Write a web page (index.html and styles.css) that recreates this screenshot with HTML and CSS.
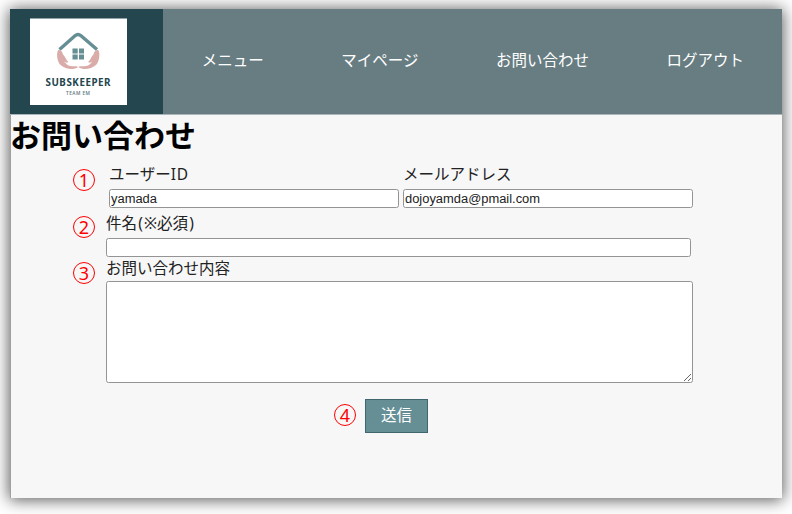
FILE: index.html
```html
<!DOCTYPE html>
<html lang="ja">
<head>
<meta charset="utf-8">
<title>お問い合わせ</title>
<link rel="stylesheet" href="styles.css">
</head>
<body>
<div class="page">
  <header class="header">
    <div class="brand">
      <svg class="logo" viewBox="0 0 97 87" role="img" aria-label="SUBSKEEPER">
        <rect y=".5" width="97" height="86.5" fill="#fff"/>
        <path d="M29.5 31.5 L45 17.8 Q48 15.2 51 17.8 L67 31.5" fill="none" stroke="#668e95" stroke-width="3.4"/>
        <path d="M42.5 30.5h5.2v5h-5.2zM49 30.5h5v5h-5zM42.5 36.5h5.2v5h-5.2zM49 36.5h5v5h-5z" fill="#668e95"/>
        <path d="M28.3 32 C26.5 34 26.5 42 30 46.5 C34 50.5 40 51.5 44 50.8 C47 50.3 48 49.5 48 48.8 C45 47.5 42 49.2 37.5 47 L34 43.5 C36 44.8 37.5 45 38.3 44 C36 42 35 38 33 36.5 C32.5 33.5 30.5 31.5 28.3 32Z" fill="#d9acaa"/>
        <g transform="matrix(-1 0 0 1 96.5 0)">
          <path d="M28.3 32 C26.5 34 26.5 42 30 46.5 C34 50.5 40 51.5 44 50.8 C47 50.3 48 49.5 48 48.8 C45 47.5 42 49.2 37.5 47 L34 43.5 C36 44.8 37.5 45 38.3 44 C36 42 35 38 33 36.5 C32.5 33.5 30.5 31.5 28.3 32Z" fill="#d9acaa"/>
        </g>
        <text class="logo-name" x="48" y="68.3" text-anchor="middle" textLength="65">SUBSKEEPER</text>
        <text class="logo-team" x="48" y="77.3" text-anchor="middle" textLength="24">TEAM EM</text>
      </svg>
    </div>
    <nav class="nav">
      <a>メニュー</a><a>マイページ</a><a>お問い合わせ</a><a>ログアウト</a>
    </nav>
  </header>
  <h1>お問い合わせ</h1>
  <form class="form">
    <div class="row user-row">
      <span class="step">1</span>
      <div class="field"><label for="uid">ユーザー<span class="latin">ID</span></label><input id="uid" value="yamada"></div>
      <div class="field"><label for="mail">メールアドレス</label><input id="mail" value="dojoyamda@pmail.com"></div>
    </div>
    <div class="row subject-row">
      <span class="step">2</span>
      <label for="subject">件名<span class="paren">(</span>※必須<span class="paren">)</span></label><input id="subject">
    </div>
    <div class="row body-row">
      <span class="step">3</span>
      <label for="content">お問い合わせ内容</label><textarea id="content"></textarea>
    </div>
    <div class="submit-row">
      <span class="step">4</span>
      <button type="button">送信</button>
    </div>
  </form>
</div>
</body>
</html>
```
FILE: styles.css
```css
* { box-sizing: border-box; }
body {
  margin: 0;
  padding: 9px 10px 16px;
  background: #fff;
  overflow: hidden;
  color: #222;
  font: 15.5px/24px "Noto Sans", "Noto Sans CJK JP", sans-serif;
}
.page {
  height: 489px;
  background: #f7f7f7;
  border-left: 1px solid #a0a0a0;
  box-shadow: 0 1px 15px 1px rgba(0, 0, 0, .65);
}
.header {
  display: flex;
  height: 106px;
  margin-left: -1px;
  background: #677d82;
  border-bottom: 1px solid #a9b5b8;
}
.brand {
  flex: none;
  width: 153px;
  padding: 9px 0 0 20px;
  background: #24464e;
}
.logo { display: block; width: 97px; height: 87px; }
.logo-name { font: 700 9.8px "Noto Sans", sans-serif; fill: #24464e; }
.logo-team { font: 600 4.8px "Open Sans", sans-serif; fill: #5b767c; }
.nav { display: flex; flex: none; align-items: center; padding-bottom: 4px; color: #fff; }
.nav a { padding: 0 38.75px; white-space: nowrap; }
h1 {
  margin: 0 0 0 -1px;
  height: 46px;
  font-size: 31px;
  line-height: 40px;
  font-weight: 700;
  color: #000;
}
.form { width: 587px; margin-left: 95px; }
.row { position: relative; }
.row label { display: block; white-space: nowrap; }
.latin { letter-spacing: .9px; }
.paren { display: inline-block; width: 7px; text-align: center; }
input, textarea {
  display: block;
  width: 100%;
  margin: 0;
  border: 1px solid #949494;
  border-radius: 2.5px;
  background: #fff;
  color: #222;
  font: 12.92px "Liberation Sans", Arial, sans-serif;
}
input { height: 19px; padding: 1px; }
.user-row { display: flex; gap: 4px; height: 50px; padding: 0 0 0 3px; }
.field { width: 290px; flex: none; }
.field label { height: 28px; line-height: 26px; }
.subject-row { height: 46px; width: 585px; }
.subject-row label { height: 27px; }
.body-row label { height: 24px; line-height: 23px; }
textarea { height: 102px; width: 587px; }
.step {
  position: absolute;
  left: -33px;
  top: 8px;
  width: 22px;
  height: 22px;
  border: 1px solid #f00;
  border-radius: 50%;
  color: #f00;
  font: 400 18px/20px "Noto Sans", sans-serif;
  text-align: center;
}
.subject-row .step { top: 5px; }
.body-row .step { top: 5px; }
.submit-row { position: relative; width: 63px; margin: 16px 0 0 259px; }
.submit-row .step { left: -31px; top: 5px; }
button {
  display: block;
  width: 63px;
  height: 34px;
  padding: 0 0 3px;
  border: 1px solid #42666d;
  background: #668e95;
  color: #fff;
  font: inherit;
}
```
